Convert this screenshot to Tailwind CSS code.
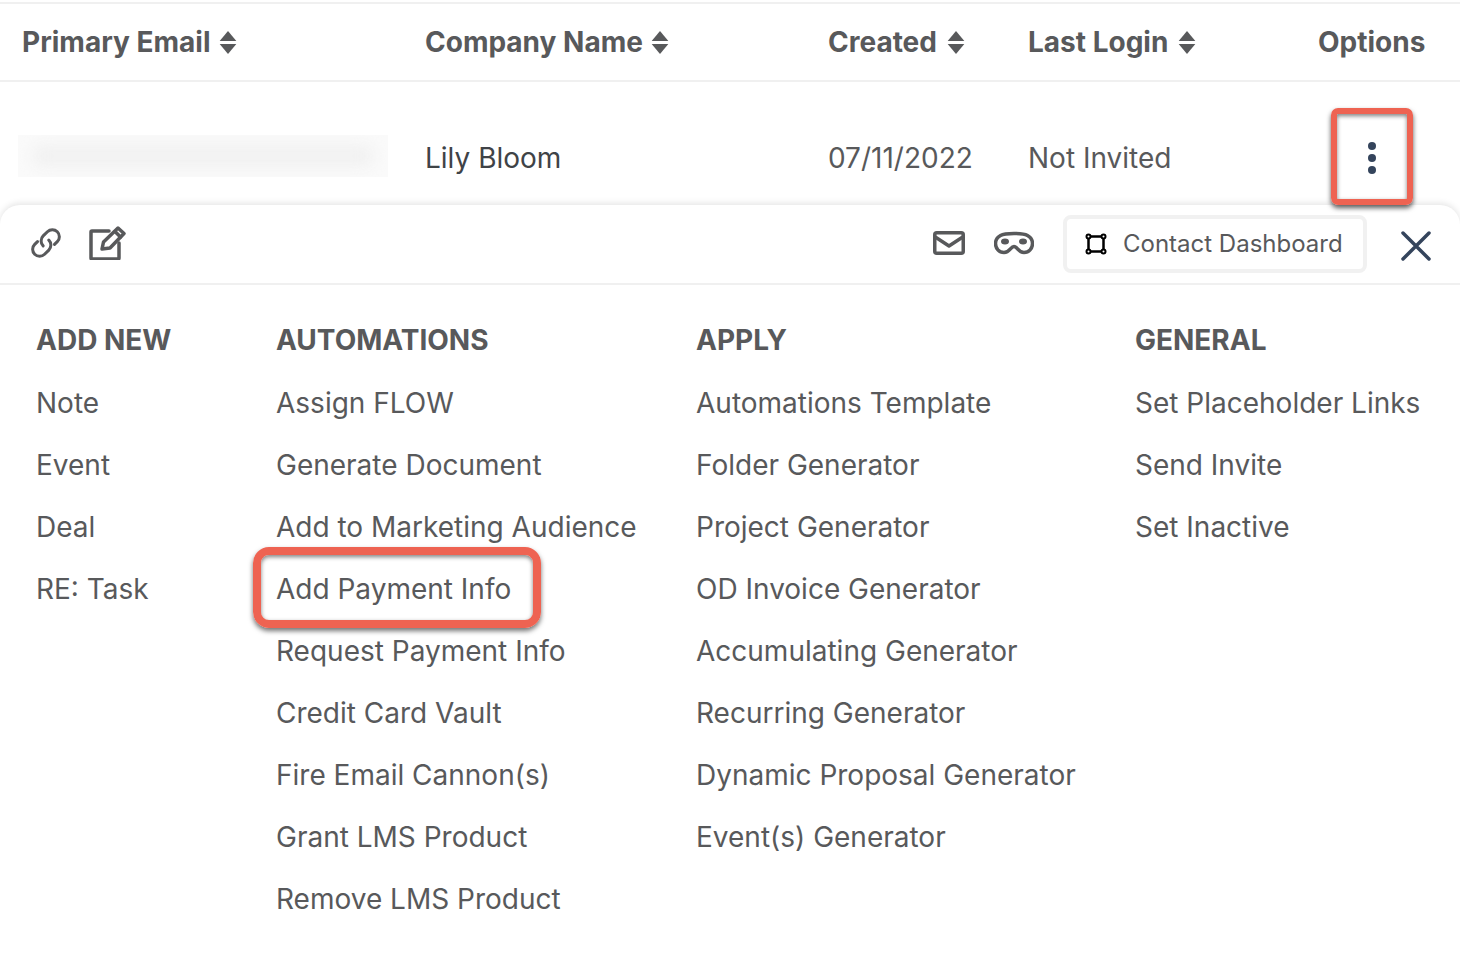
<!DOCTYPE html>
<html>
<head>
    <meta charset="UTF-8">
    <title>Contacts</title>
    <script src="https://cdn.jsdelivr.net/npm/@tailwindcss/browser@4"></script>
</head>
<body class="bg-white font-['Inter','Liberation_Sans',sans-serif] text-[#58595b] overflow-hidden">
    <div class="w-[1460px] h-[958px] overflow-hidden">
        <!-- table head -->
        <div class="mt-[2px] h-[80px] border-y-2 border-[#f0f0f0] flex items-center text-[28px] font-bold">
            <div class="w-[425px] pl-[22px] flex items-center gap-[9px]">Primary Email
                <svg class="w-[18px] h-[25px]" viewBox="0 0 17 24" fill="currentColor"><path d="M8.5 1 16.5 10.500H.5z"/><path d="M8.500 23 16.500 13.500H.5z"/></svg>
            </div>
            <div class="w-[403px] flex items-center gap-[8px]">Company Name
                <svg class="w-[18px] h-[25px]" viewBox="0 0 17 24" fill="currentColor"><path d="M8.5 1 16.5 10.500H.5z"/><path d="M8.500 23 16.500 13.500H.5z"/></svg>
            </div>
            <div class="w-[200px] flex items-center gap-[10px]">Created
                <svg class="w-[18px] h-[25px]" viewBox="0 0 17 24" fill="currentColor"><path d="M8.5 1 16.5 10.500H.5z"/><path d="M8.500 23 16.500 13.500H.5z"/></svg>
            </div>
            <div class="w-[290px] flex items-center gap-[10px]">Last Login
                <svg class="w-[18px] h-[25px]" viewBox="0 0 17 24" fill="currentColor"><path d="M8.5 1 16.5 10.500H.5z"/><path d="M8.500 23 16.500 13.500H.5z"/></svg>
            </div>
            <div>Options</div>
        </div>

        <!-- contact row -->
        <div class="h-[123px] pt-[28px] flex items-center text-[28px] text-[#3f4347]">
            <div class="w-[425px] pl-[18px] mt-[-4px]">
                <div class="w-[370px] h-[42px] bg-[#fafafa] overflow-hidden">
                    <div class="mx-[14px] my-[10px] h-[22px] rounded-full bg-[#f1f1f1] blur-[7px]"></div>
                </div>
            </div>
            <div class="w-[403px]">Lily Bloom</div>
            <div class="w-[200px] text-[#58595b]">07/11/2022</div>
            <div class="w-[303px] text-[#58595b]">Not Invited</div>
            <div class="relative z-10 shrink-0 w-[82px] h-[97px] mt-[-3px] pt-[4px] border-[6px] border-[#ee6352] rounded-[7px] shadow-[0_3px_5px_rgba(0,0,0,0.65),inset_0_2px_4px_rgba(0,0,0,0.5)] flex flex-col items-center justify-center gap-[4px]">
                <span class="w-2 h-2 rounded-full bg-[#34445c]"></span>
                <span class="w-2 h-2 rounded-full bg-[#34445c]"></span>
                <span class="w-2 h-2 rounded-full bg-[#34445c]"></span>
            </div>
        </div>

        <!-- expanded panel -->
        <div class="h-[760px] rounded-t-[20px] bg-white shadow-[0_-2px_6px_rgba(0,0,0,0.1)]">
            <div class="h-[80px] border-b-2 border-[#f0f0f0] flex items-center pl-[29px] pr-[29px]">
                <svg class="w-[34px] h-[34px] mt-[-3px]" viewBox="0 0 34 34" fill="none" stroke="currentColor" stroke-width="3" stroke-linecap="round">
                    <g transform="rotate(-45 17 17)">
                        <path d="M12 10H8a7 7 0 0 0 0 14h6a7 7 0 0 0 7-7"/>
                        <path d="M22 24h4a7 7 0 0 0 0-14h-6a7 7 0 0 0-7 7"/>
                    </g>
                </svg>
                <svg class="w-[38px] h-[34px] ml-[26px] mt-[-2px]" viewBox="0 0 38 34" fill="none" stroke="currentColor" stroke-width="3.500" stroke-linejoin="round" stroke-linecap="round">
                    <path d="M20 5H3a1 1 0 0 0-1 1v26a1 1 0 0 0 1 1h26a1 1 0 0 0 1-1V17"/>
                    <path d="M13 23l1.500-7L29 2l6 5.500L21 22z"/>
                    <path d="M26 5.500l5.500 5.500"/>
                </svg>
                <svg class="w-[32px] h-[24px] ml-auto mt-[-2px]" viewBox="0 0 32 24" fill="none" stroke="currentColor" stroke-width="3.500" stroke-linejoin="round">
                    <rect x="1.750" y="1.750" width="28.500" height="20.500" rx="2"/>
                    <path d="M1.500 5.500 16 15l14.500-9.500"/>
                </svg>
                <svg class="w-[40px] h-[24px] ml-[29px] mt-[-2px]" viewBox="0 0 40 24" fill="none" stroke="currentColor" stroke-width="3.500">
                    <path d="M20 2.500c-5 0-10 0-13.500 2C3 6.500 1.500 9 1.500 12.500c0 5 3.500 9 8.500 9 6 0 6.500-6 10-6s4 6 10 6c5 0 8.500-4 8.500-9 0-3.500-1.500-6-5-8-3.500-2-8.500-2-13.500-2z"/>
                    <ellipse cx="11" cy="10.500" rx="4" ry="3" fill="currentColor" stroke="none"/>
                    <ellipse cx="29" cy="10.500" rx="4" ry="3" fill="currentColor" stroke="none"/>
                </svg>
                <div class="ml-[29px] w-[304px] h-[58px] border-4 border-[#f1f1f1] rounded-[8px] flex items-center pl-[18px] text-[24px]">
                    <svg class="w-[22px] h-[22px] text-black" viewBox="0 0 22 22" fill="none" stroke="currentColor" stroke-width="2.500">
                        <rect x="3.500" y="3.500" width="15" height="15"/>
                        <circle cx="3.500" cy="3.500" r="2" fill="white" stroke-width="2"/><circle cx="18.500" cy="3.500" r="2" fill="white" stroke-width="2"/><circle cx="3.500" cy="18.500" r="2" fill="white" stroke-width="2"/><circle cx="18.500" cy="18.500" r="2" fill="white" stroke-width="2"/>
                    </svg>
                    <span class="ml-[16px]">Contact Dashboard</span>
                </div>
                <svg class="w-[30px] h-[30px] ml-[34px] mt-[3px] text-[#34445c]" viewBox="0 0 30 30" fill="none" stroke="currentColor" stroke-width="3.500" stroke-linecap="round">
                    <path d="M2 2l26 26M28 2 2 28"/>
                </svg>
            </div>

            <div class="flex pt-[35px] pl-[36px] text-[28px]">
                <div class="w-[240px]">
                    <h3 class="h-[40px] leading-[40px] font-bold mb-[12px]">ADD NEW</h3>
                    <div class="h-[62px] leading-[62px]">Note</div>
                    <div class="h-[62px] leading-[62px]">Event</div>
                    <div class="h-[62px] leading-[62px]">Deal</div>
                    <div class="h-[62px] leading-[62px]">RE: Task</div>
                </div>
                <div class="w-[420px]">
                    <h3 class="h-[40px] leading-[40px] font-bold mb-[12px]">AUTOMATIONS</h3>
                    <div class="h-[62px] leading-[62px]">Assign FLOW</div>
                    <div class="h-[62px] leading-[62px]">Generate Document</div>
                    <div class="h-[62px] leading-[62px]">Add to Marketing Audience</div>
                    <div class="h-[62px] leading-[62px] relative">Add Payment Info
                        <span class="absolute left-[-23px] top-[-11px] w-[288px] h-[81px] border-[8px] border-[#ee6352] rounded-[16px] shadow-[0_3px_5px_rgba(0,0,0,0.55),inset_0_2px_4px_rgba(0,0,0,0.5)]"></span>
                    </div>
                    <div class="h-[62px] leading-[62px]">Request Payment Info</div>
                    <div class="h-[62px] leading-[62px]">Credit Card Vault</div>
                    <div class="h-[62px] leading-[62px]">Fire Email Cannon(s)</div>
                    <div class="h-[62px] leading-[62px]">Grant LMS Product</div>
                    <div class="h-[62px] leading-[62px]">Remove LMS Product</div>
                </div>
                <div class="w-[439px]">
                    <h3 class="h-[40px] leading-[40px] font-bold mb-[12px]">APPLY</h3>
                    <div class="h-[62px] leading-[62px]">Automations Template</div>
                    <div class="h-[62px] leading-[62px]">Folder Generator</div>
                    <div class="h-[62px] leading-[62px]">Project Generator</div>
                    <div class="h-[62px] leading-[62px]">OD Invoice Generator</div>
                    <div class="h-[62px] leading-[62px]">Accumulating Generator</div>
                    <div class="h-[62px] leading-[62px]">Recurring Generator</div>
                    <div class="h-[62px] leading-[62px]">Dynamic Proposal Generator</div>
                    <div class="h-[62px] leading-[62px]">Event(s) Generator</div>
                </div>
                <div>
                    <h3 class="h-[40px] leading-[40px] font-bold mb-[12px]">GENERAL</h3>
                    <div class="h-[62px] leading-[62px]">Set Placeholder Links</div>
                    <div class="h-[62px] leading-[62px]">Send Invite</div>
                    <div class="h-[62px] leading-[62px]">Set Inactive</div>
                </div>
            </div>
        </div>
    </div>
</body>
</html>
